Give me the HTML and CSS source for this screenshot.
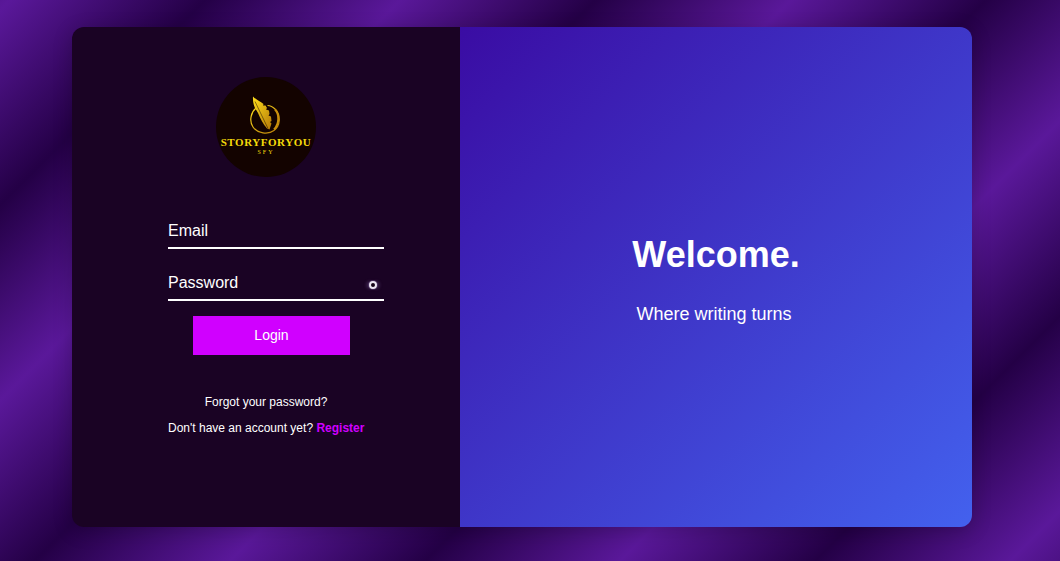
FILE: index.html
```html
<!DOCTYPE html>
<html lang="en">
<head>
<meta charset="utf-8">
<title>Login</title>
<link rel="stylesheet" href="styles.css">
</head>
<body>
<main class="card">
  <section class="login">
    <div class="logo">
      <svg class="logo-mark" viewBox="0 0 34 40" width="34" height="40" aria-hidden="true">
        <defs>
          <linearGradient id="gold" x1="0" y1="0" x2="1" y2="1">
            <stop offset="0" stop-color="#ffdf1c"/>
            <stop offset="1" stop-color="#b57a08"/>
          </linearGradient>
        </defs>
        <path class="ring" d="M8.500 13C3 16.500 0.800 26 5 32C9.500 38.500 20 40 26 35.500C32.500 31 33 20.500 27.500 14.500C25.500 12.500 23 10.500 19.500 10.500"/>
        <path class="ring-heavy" d="M27 14.500C31.500 19 31.500 29 26 34.500"/>
        <path class="feather" d="M5 1.500C8 5 13 6.500 15.500 9L15 10.500L17.500 10.500L19 13L18 14.500L21 15.500L21.500 19L20.500 20.500L23 21.500L23.500 26L22 27L23.500 28.500L21.500 34.500L19 33.500C15 29 12.500 24 10 18C7 13.500 4.500 9 5 1.500Z"/>
        <path class="vein" d="M7 6.500L20 33.500"/>
      </svg>
      <span class="logo-name">STORYFORYOU</span>
      <span class="logo-tag">SFY</span>
    </div>
    <form class="form">
      <div class="field"><input class="input" type="text" placeholder="Email"></div>
      <div class="field">
        <input class="input" type="password" placeholder="Password">
        <span class="eye"></span>
      </div>
      <button class="btn" type="button">Login</button>
      <div class="links">
        <p class="link-line">Forgot your password?</p>
        <p class="link-line">Don't have an account yet? <a class="register" href="#">Register</a></p>
      </div>
    </form>
  </section>
  <section class="welcome">
    <h1 class="title">Welcome.</h1>
    <p class="subtitle">Where writing turns</p>
  </section>
</main>
</body>
</html>
```
FILE: styles.css
```css
* { box-sizing: border-box; }
html, body { height: 100%; }
body {
  margin: 0;
  overflow: hidden;
  font-family: "Liberation Sans", Arial, sans-serif;
  color: #fff;
  display: flex;
  justify-content: center;
  align-items: flex-start;
  padding: 27px 16px 0 0;
  background: repeating-linear-gradient(135deg,
    #5a189a 7px, #240046 145px, #5a189a 283px);
}
.card {
  width: 900px;
  height: 500px;
  display: flex;
  border-radius: 12px;
  overflow: hidden;
  box-shadow: 0 4px 20px rgba(0, 0, 0, 0.2);
}
.login {
  width: 388px;
  background: #1a0324;
  padding: 50px 0 0 96px;
}
.logo {
  width: 100px;
  height: 100px;
  margin-left: 48px;
  border-radius: 50%;
  background: #130300;
  display: flex;
  flex-direction: column;
  align-items: center;
  padding-top: 18px;
  color: #f5d90a;
  font-family: "Liberation Serif", serif;
}
.logo-mark { margin-right: 2px; flex: none; }
.ring { fill: none; stroke: url(#gold); stroke-width: 1.200; }
.ring-heavy { fill: none; stroke: #c98f0c; stroke-width: 2; }
.feather { fill: url(#gold); }
.vein { fill: none; stroke: #1a0a00; stroke-width: 0.500; }
.logo-name {
  font-size: 11px;
  line-height: 10px;
  font-weight: bold;
  letter-spacing: 0.550px;
  white-space: nowrap;
  margin-top: 2px;
}
.logo-tag {
  font-size: 6px;
  line-height: 7px;
  letter-spacing: 2px;
  margin-top: 2px;
}
.form { margin-top: 34px; width: 216px; display: flex; flex-direction: column; }
.field { position: relative; margin-bottom: 14px; }
.input {
  display: block;
  width: 100%;
  height: 38px;
  padding: 3px 0 0;
  border: 0;
  border-bottom: 2px solid #fff;
  border-radius: 0;
  outline: 0;
  background: transparent;
  color: #fff;
  font: 16px "Liberation Sans", Arial, sans-serif;
}
.input::placeholder { color: #fff; opacity: 1; }
.eye {
  position: absolute;
  right: 7px;
  top: 18px;
  width: 8px;
  height: 8px;
  border-radius: 50%;
  background: #140316;
  border: 2.500px solid #ece6f2;
  box-shadow: 0 0 0 1px rgba(120, 90, 150, 0.4), 3px 0 3px rgba(120, 90, 150, 0.3), -3px 0 3px rgba(120, 90, 150, 0.3);
}
.btn {
  width: 157px;
  height: 39px;
  margin: 1px 0 0 25px;
  padding: 0 0 2px;
  border: 0;
  border-radius: 0;
  background: #d000ff;
  color: #fff;
  font: 14px "Liberation Sans", Arial, sans-serif;
}
.links { width: 196px; margin-top: 40px; text-align: center; font-size: 12px; white-space: nowrap; }
.link-line { margin: 0 0 12px; line-height: 14px; }
.register { color: #d000ff; font-weight: bold; text-decoration: none; }
.welcome {
  flex: 1;
  background: linear-gradient(135deg, #3a0ca3, #4361ee);
  display: flex;
  flex-direction: column;
  align-items: center;
  padding-top: 207px;
}
.title { margin: 0; font-size: 36px; line-height: 42px; font-weight: bold; }
.subtitle { margin: 28px 4px 0 0; font-size: 18px; line-height: 21px; }
```
